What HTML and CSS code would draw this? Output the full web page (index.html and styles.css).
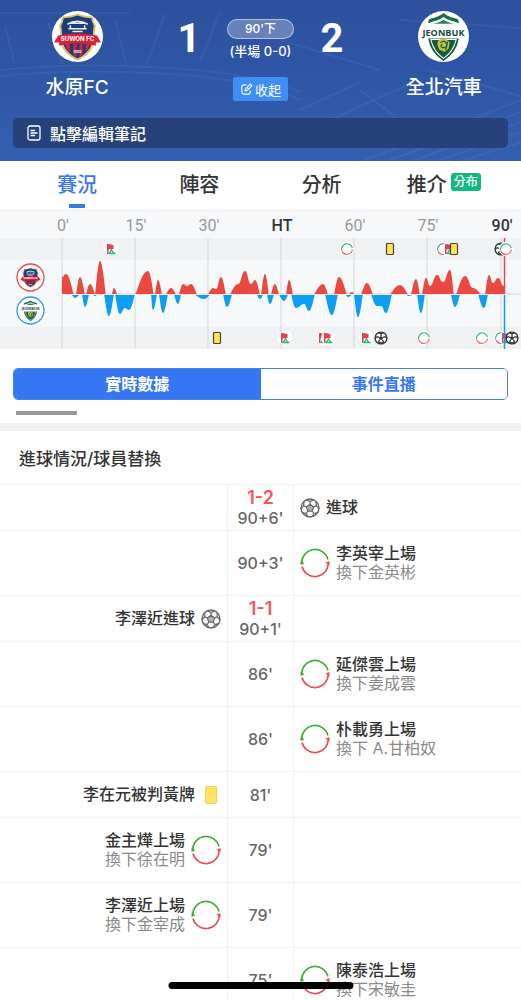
FILE: index.html
```
<!DOCTYPE html>
<html lang="zh-Hant">
<head>
  <meta charset="UTF-8" />
  <meta name="viewport" content="width=device-width, initial-scale=1.0" />
  <title>水原FC 1-2 全北汽車</title>
  <link rel="stylesheet" href="styles.css">
</head>
<body>
  <!-- shared icons -->
  <svg class="sprite" aria-hidden="true">
    <symbol id="suwon" viewBox="0 0 50 50">
      <circle cx="25" cy="25" r="25" fill="#fff"/>
      <path d="M25 2.500 Q31 5 40 5.500 Q40 10 43 14 Q42 19 42 27 Q41 42 25 48.500 Q9 42 8 27 Q8 19 7 14 Q10 10 10 5.500 Q19 5 25 2.500Z" fill="#d8c27a"/>
      <path d="M25 4.500 Q31 7 38.500 7 Q39 11 41 14.500 Q40 19 40 27 Q39 40 25 46.500 Q11 40 10 27 Q10 19 9 14.500 Q11 11 11.500 7 Q19 7 25 4.500Z" fill="#1d3e74"/>
      <path d="M13 32h4.500v9l-2.500-3zM21 32h3v13l-3-2zM27 32h3v11l-3 2zM33 32h4q-1 5-4 8z" fill="#d92236"/>
      <path d="M15 13 Q25 7 35 13M18 12h14M16 17.500h18M18 14v3M32 14v3M20 20h10" fill="none" stroke="#e4ebf3" stroke-width="1.500"/>
      <path d="M6 24 Q25 20 44 24 L48 31 L43 31 V34 Q25 29 7 34 V31 L2 31Z" fill="#dc2138"/>
      <text x="25" y="29.500" text-anchor="middle" class="crest-text" fill="#fff">SUWON FC</text>
      <text x="25" y="41" text-anchor="middle" class="crest-year" fill="#fff">2003</text>
    </symbol>
    <symbol id="jeonbuk" viewBox="0 0 50 50">
      <circle cx="25" cy="25" r="25" fill="#fff"/>
      <path d="M10 12 Q10 8 12 7.500 Q20 6 25 2 Q30 6 38 7.500 Q40 8 40 12 L36 10.500 Q29 9 25 6 Q21 9 14 10.500Z" fill="#1b6b4c"/>
      <path d="M14 12.500 Q21 11.500 25 8.500 Q29 11.500 36 12.500Z" fill="#2b7958"/>
      <path d="M10 27h30q-2 14-15 22Q12 41 10 27Z" fill="#145c3e"/>
      <path d="M12.500 28h25q-3 12-12.500 18.500Q15.500 40 12.500 28Z" fill="none" stroke="#fff" stroke-width="1"/>
      <path d="M20 29q5-4 9 0l2 2-1 6-4 3-5-2q-3-5-1-9z" fill="#c7c23c"/>
      <path d="M22 31q4-3 6 1t-4 4q-3-2 0-3M29 30l-2 8" fill="none" stroke="#145c3e" stroke-width="1.200"/>
      <text x="25" y="24.500" text-anchor="middle" class="crest-name" fill="#174a39">JEONBUK</text>
    </symbol>
    <symbol id="ball" viewBox="0 0 20 20">
      <circle cx="10" cy="10" r="9" fill="#fff" stroke="currentColor" stroke-width="1.400"/>
      <path d="M10 6.300l3.600 2.600-1.400 4.300H7.800L6.400 8.900z" fill="currentColor" fill-opacity=".5" stroke="currentColor" stroke-width="1.200"/>
      <path d="M10 6.300V3.500M13.600 8.900l2.800-1M12.200 13.200l1.800 2.500M7.800 13.200L6 15.700M6.400 8.900L3.600 7.900M6.500 1.900L10 3.500l3.500-1.600M16.400 7.900L16 4M16.400 7.900L19 10.800M14 15.700l3.500-1M14 15.700l-2 3M6 15.700l2 3M6 15.700l-3.500-1M3.600 7.900L1 10.800M3.600 7.900L4 4" fill="none" stroke="currentColor" stroke-width="1.200"/>
    </symbol>
    <symbol id="sub" viewBox="0 0 30 30">
      <path d="M1.800 14.500A13.300 13.300 0 0 1 28 11.500" fill="none" stroke="#43a83c" stroke-width="1.600"/>
      <path d="M.5 12.500V17l4-1.500z" fill="#43a83c"/>
      <path d="M28.200 15.500A13.300 13.300 0 0 1 2 18.500" fill="none" stroke="#f04b50" stroke-width="1.600"/>
      <path d="M29.500 17.500V13l-4 1.500z" fill="#f04b50"/>
    </symbol>
    <symbol id="card" viewBox="0 0 12 18">
      <rect x=".5" y=".5" width="11" height="17" rx="1.500" fill="#fde45f" stroke="#ecd25c"/>
    </symbol>
    <symbol id="m-sub" viewBox="0 0 14 14">
      <circle cx="7" cy="7" r="7" fill="#fff"/>
      <path d="M1.600 8A5.500 5.500 0 0 1 12.400 6" fill="none" stroke="#2eb58a" stroke-width="1.100"/>
      <path d="M12.400 7.500A5.500 5.500 0 0 1 1.700 8.500" fill="none" stroke="#f0605c" stroke-width="1.100"/>
    </symbol>
    <symbol id="m-corner" viewBox="0 0 14 14">
      <circle cx="7" cy="7" r="7" fill="#fff"/>
      <path d="M3 2h1.500l5 1v4l-5 .5V12H3z" fill="#e8404c"/>
      <path d="M4.500 11.500h7M5.500 11l2-3 2 3" fill="none" stroke="#1fb572" stroke-width="1.300"/>
    </symbol>
    <symbol id="m-card" viewBox="0 0 14 14">
      <rect x="3.500" y="1.500" width="7" height="11" rx="1" fill="#fde25a" stroke="#45422f" stroke-width="1.200"/>
    </symbol>
    <symbol id="m-ball" viewBox="0 0 20 20">
      <circle cx="10" cy="10" r="8.500" fill="#fff" stroke="#333" stroke-width="1.800"/>
      <path d="M10 7l3 2.200-1.200 3.400H8.200L7 9.200z" fill="#333"/>
      <path d="M10 7V4M13 9.200l3-1.200M11.800 12.600l2.200 3M8.200 12.600l-2.200 3M7 9.200L4 8M6.500 2.500L10 4l3.500-1.500M16 8l2.500 3M4 8l-2.500 3M14 15.600L10.500 17h-1L6 15.600" fill="none" stroke="#333" stroke-width="1.800"/>
    </symbol>
  </svg>

  <main class="app">
    <header class="match">
      <svg class="stadium" viewBox="0 0 521 161" preserveAspectRatio="none" aria-hidden="true">
        <path d="M0 13H130M0 70Q80 62 170 68T300 92M0 76Q80 68 170 74T300 100M5 25L14 62M48 22l14 42M115 20l12 46M165 14l-18 50M220 12l-20 50" />
        <path d="M300 110l60-28M330 120l80-36M365 160l156-60M390 160l131-48M415 160l106-38M440 160l81-28M465 160l56-18M280 40l100 30M400 20l121 8M360 90l40 30M430 70l90 26" />
      </svg>
      <div class="scoreline">
        <div class="team">
          <svg class="crest"><use href="#suwon"/></svg>
          <span class="team-name">水原FC</span>
        </div>
        <div class="result">
          <span class="goals">1</span>
          <div class="status">
            <span class="clock">90'下</span>
            <span class="half">(半場 0-0)</span>
            <button class="collapse">
              <svg viewBox="0 0 14 14" width="13" height="13" fill="none" stroke="currentColor" stroke-width="1.200"><path d="M7 2H4Q2 2 2 4v6q0 2 2 2h5q2 0 2-2V8M5.500 8.500l.6-2.400L11 1.200l1.800 1.800L7.900 7.900zM8 5.500l2 1"/></svg>
              收起
            </button>
          </div>
          <span class="goals">2</span>
        </div>
        <div class="team">
          <svg class="crest"><use href="#jeonbuk"/></svg>
          <span class="team-name">全北汽車</span>
        </div>
      </div>
      <button class="note">
        <svg viewBox="0 0 14 16" width="14" height="16" fill="none" stroke="currentColor" stroke-width="1.300"><rect x="1" y="1" width="12" height="14" rx="2"/><path d="M3.500 5.500H8M3.500 8h7M3.500 10.500H8"/></svg>
        點擊編輯筆記
      </button>
    </header>

    <nav class="tabs">
      <a href="#live" class="tab active">賽況</a>
      <a href="#lineup" class="tab">陣容</a>
      <a href="#analysis" class="tab">分析</a>
      <a href="#tips" class="tab">推介<span class="badge">分布</span></a>
    </nav>

    <svg class="momentum" id="momentum" viewBox="0 0 521 139" role="img" aria-label="比賽走勢">
      <rect width="521" height="139" fill="#f6f8fa"/>
      <rect y="28" width="521" height="22" fill="#f0f1f2"/>
      <rect y="117" width="521" height="22" fill="#f0f1f2"/>
      <path d="M0 .5H521" stroke="#eceef0"/>
      <g id="grid"></g>
      <path d="M62 84H521" stroke="#d5d7d9"/>
      <path id="home" fill="#ea4942"/>
      <path id="away" fill="#0a9ff5"/>
      <path d="M62 84.500H505" stroke="#fbe9e8"/>
      <circle cx="30.500" cy="67.500" r="13.500" fill="#fff" stroke="#e0504c" stroke-width="1.300"/>
      <use href="#suwon" x="19.500" y="56.500" width="22" height="22"/>
      <circle cx="30.500" cy="100.500" r="13.500" fill="#fff" stroke="#2a9fdc" stroke-width="1.300"/>
      <use href="#jeonbuk" x="19.500" y="89.500" width="22" height="22"/>
      <g id="markers"></g>
      <path d="M504.500 28V84" stroke="#ea4942" stroke-width="1.500"/>
      <path d="M504.500 85V139" stroke="#0a9ff5" stroke-width="1.500"/>
      <use href="#m-sub" x="499" y="32" width="14" height="14"/>
      <use href="#m-ball" x="505" y="121" width="14" height="14"/>
    </svg>

    <div class="switch">
      <button class="switch-item on">實時數據</button>
      <button class="switch-item">事件直播</button>
    </div>
    <div class="scroll-hint"></div>

    <section class="events">
      <h2>進球情況/球員替換</h2>
      <table>
        <colgroup><col><col class="col-time"><col></colgroup>
        <tbody>
          <tr>
            <td></td>
            <td class="time"><b>1-2</b>90+6'</td>
            <td><div class="event"><svg class="ball"><use href="#ball"/></svg><p>進球</p></div></td>
          </tr>
          <tr class="tall">
            <td></td>
            <td class="time">90+3'</td>
            <td><div class="event"><svg class="sub"><use href="#sub"/></svg><p>李英宰上場<small>換下金英彬</small></p></div></td>
          </tr>
          <tr>
            <td><div class="event left"><svg class="ball"><use href="#ball"/></svg><p>李澤近進球</p></div></td>
            <td class="time"><b>1-1</b>90+1'</td>
            <td></td>
          </tr>
          <tr class="tall">
            <td></td>
            <td class="time">86'</td>
            <td><div class="event"><svg class="sub"><use href="#sub"/></svg><p>延傑雲上場<small>換下姜成雲</small></p></div></td>
          </tr>
          <tr class="tall">
            <td></td>
            <td class="time">86'</td>
            <td><div class="event"><svg class="sub"><use href="#sub"/></svg><p>朴載勇上場<small>換下 A.甘柏奴</small></p></div></td>
          </tr>
          <tr>
            <td><div class="event left"><svg class="card"><use href="#card"/></svg><p>李在元被判黃牌</p></div></td>
            <td class="time">81'</td>
            <td></td>
          </tr>
          <tr class="tall">
            <td><div class="event left"><svg class="sub"><use href="#sub"/></svg><p>金主燁上場<small>換下徐在明</small></p></div></td>
            <td class="time">79'</td>
            <td></td>
          </tr>
          <tr class="tall">
            <td><div class="event left"><svg class="sub"><use href="#sub"/></svg><p>李澤近上場<small>換下金宰成</small></p></div></td>
            <td class="time">79'</td>
            <td></td>
          </tr>
          <tr class="tall">
            <td></td>
            <td class="time">75'</td>
            <td><div class="event"><svg class="sub"><use href="#sub"/></svg><p>陳泰浩上場<small>換下宋敏圭</small></p></div></td>
          </tr>
        </tbody>
      </table>
    </section>
  </main>
  <div class="home-bar"></div>

  <script src="chart.js"></script>
</body>
</html>
```
FILE: styles.css
```
* {
  box-sizing: border-box;
}
body {
  margin: 0;
  background: #fff;
  color: #333;
  font-family: Inter, "Noto Sans CJK TC", sans-serif;
}
button {
  border: none;
  font-family: inherit;
  cursor: pointer;
}
.sprite {
  display: none;
}
.app {
  height: 100vh;
  overflow-y: auto;
  scrollbar-width: none;
}

/* match header */
.match {
  position: relative;
  padding: 11px 13px 13px;
  background: linear-gradient(#2c509c, #2f57a8 50%, #355fb0);
  color: #fff;
}
.stadium {
  position: absolute;
  inset: 0;
  width: 100%;
  height: 100%;
  fill: none;
  stroke: #fff;
  stroke-opacity: 0.05;
  stroke-width: 2;
}
.scoreline {
  position: relative;
  display: grid;
  grid-template-columns: 1fr 2fr 1fr;
  padding: 0 3px;
}
.team {
  display: flex;
  flex-direction: column;
  align-items: center;
  gap: 13px;
}
.crest {
  width: 51px;
  height: 51px;
}
.crest-text {
  font: 700 6px Inter, sans-serif;
}
.crest-year {
  font: 700 3px Inter, sans-serif;
}
.crest-name {
  font: 700 9px "Open Sans", sans-serif;
}
.team-name {
  font-size: 19px;
  font-weight: 500;
  line-height: 26px;
}
.result {
  display: flex;
  justify-content: center;
  gap: 26px;
}
.goals {
  width: 24px;
  text-align: center;
  font-family: Roboto, sans-serif;
  font-size: 40px;
  font-weight: 700;
  line-height: 56px;
}
.status {
  display: flex;
  flex-direction: column;
  align-items: center;
  padding-top: 8px;
}
.clock {
  width: 67px;
  height: 20px;
  border: 1px solid rgba(255, 255, 255, 0.5);
  border-radius: 10px;
  background: rgba(255, 255, 255, 0.28);
  text-align: center;
  font-size: 12px;
  font-weight: 500;
  line-height: 18px;
}
.half {
  margin-top: 2px;
  font-size: 13px;
  font-weight: 500;
  line-height: 20px;
}
.collapse {
  display: flex;
  align-items: center;
  gap: 2px;
  height: 24px;
  margin-top: 16px;
  padding: 0 7px;
  border-radius: 2px;
  background: #3f8df6;
  color: #fff;
  font-size: 13px;
}
.note {
  position: relative;
  display: flex;
  align-items: center;
  gap: 9px;
  width: 100%;
  height: 30px;
  margin-top: 17px;
  padding: 0 14px;
  border-radius: 5px;
  background: #27427b;
  color: #fff;
  font-size: 16px;
  font-weight: 500;
}

/* tabs */
.tabs {
  display: grid;
  grid-template-columns: repeat(4, 1fr);
  height: 49px;
  padding: 0 16px;
}
.tab {
  position: relative;
  display: flex;
  justify-content: center;
  color: #333;
  font-size: 20px;
  font-weight: 500;
  line-height: 48px;
  text-decoration: none;
}
.tab.active {
  color: #3878f0;
}
.tab.active::after {
  content: "";
  position: absolute;
  bottom: 2px;
  width: 16px;
  height: 4px;
  background: #3878e8;
}
.badge {
  height: 18px;
  margin: 12px 0 0 4px;
  padding: 0 3px;
  border-radius: 3px;
  background: #10b981;
  color: #fff;
  font-size: 12px;
  line-height: 18px;
}

/* momentum chart */
.momentum {
  display: block;
  width: 100%;
}
.tick {
  fill: #96989b;
  font: 400 16px Roboto, sans-serif;
}
.tick.strong {
  fill: #333;
  font-weight: 500;
}

.switch {
  display: flex;
  height: 32px;
  margin: 19px 13px 0;
  overflow: hidden;
  border: 1px solid #4a80e8;
  border-radius: 5px;
}
.switch-item {
  flex: 1;
  padding: 0 0 2px;
  background: #fff;
  color: #3878f0;
  font-size: 16px;
  font-weight: 700;
}
.switch-item.on {
  background: #3577f2;
  color: #fff;
}
.scroll-hint {
  width: 61px;
  height: 4px;
  margin: 11px 16px 8px;
  background: #999;
}

/* goals and substitutions */
.events {
  border-top: 8px solid #f1f1f1;
}
.events h2 {
  margin: 0;
  padding: 3px 19px 0;
  font-size: 17px;
  font-weight: 500;
  line-height: 50px;
}
table {
  width: 100%;
  table-layout: fixed;
  border-collapse: collapse;
}
.col-time {
  width: 66px;
}
tr {
  height: 46px;
  border-top: 1px solid #f0f0f0;
}
.tall {
  height: 65px;
}
td {
  padding: 0 6px;
}
.time {
  padding: 0;
  border: solid #f0f0f0;
  border-width: 0 1px;
  color: #666;
  text-align: center;
  font-size: 16px;
  font-weight: 500;
  line-height: 20px;
}
.time b {
  display: block;
  color: #fa5555;
  font-size: 18px;
  font-weight: 600;
}
.event {
  display: flex;
  align-items: center;
  gap: 6px;
}
.event.left {
  flex-direction: row-reverse;
  text-align: right;
}
.event p {
  margin: 0;
  font-size: 16px;
  font-weight: 500;
  line-height: 19px;
}
.event small {
  display: block;
  color: #8a8a8a;
  font-size: 16px;
  font-weight: 400;
}
.ball {
  width: 20px;
  height: 20px;
  color: #666;
}
.sub {
  width: 30px;
  height: 30px;
}
.card {
  width: 12px;
  height: 18px;
  margin: 0 4px;
}
.home-bar {
  position: fixed;
  bottom: 11px;
  left: 50%;
  width: 185px;
  height: 7px;
  border-radius: 4px;
  background: #000;
  transform: translateX(-50%);
}
```
FILE: chart.js
```
const BASE = 84;

const ticks = [
  [62, "0'"], [135, "15'"], [208, "30'"], [281, "HT", true],
  [354, "60'"], [427, "75'"], [501, "90'", true]
];

// each run is a list of x, y pairs above or below the base line
const home = [
  [62, 84, 62, 67, 66, 64, 74, 84],
  [76, 84, 80, 67, 85, 84],
  [86, 84, 90, 74, 95, 84],
  [95, 84, 100, 51, 106, 84],
  [112, 84, 114, 78, 117, 84],
  [135, 84, 148, 61, 154, 84],
  [155, 84, 158, 70, 162, 84],
  [166, 84, 171, 78, 176, 84],
  [179, 84, 183, 74, 187, 76, 191, 74, 197, 84],
  [208, 84, 213, 78, 216, 79, 221, 67, 226, 84],
  [230, 84, 238, 74, 245, 61, 251, 74, 255, 70, 260, 84],
  [261, 84, 265, 64, 269, 84],
  [271, 84, 275, 74, 279, 84],
  [286, 84, 289, 70, 293, 84],
  [314, 84, 323, 74, 328, 84],
  [334, 84, 339, 67, 347, 84],
  [349, 84, 352, 82, 354, 84],
  [361, 84, 367, 73, 373, 84],
  [390, 84, 400, 75, 408, 84],
  [411, 84, 416, 69, 420, 84],
  [422, 84, 426, 68, 430, 76, 437, 65, 443, 72, 450, 60, 454, 84],
  [456, 84, 465, 66, 473, 78, 481, 84],
  [485, 84, 489, 65, 493, 73, 498, 68, 504, 76, 504, 84]
];
const away = [
  [72, 85, 75, 88, 79, 85],
  [82, 85, 85, 97, 89, 85],
  [93, 85, 95, 86, 97, 85],
  [104, 85, 109, 106, 114, 85],
  [115, 85, 120, 104, 125, 98, 129, 100, 135, 85],
  [151, 85, 153, 100, 157, 85],
  [159, 85, 163, 103, 168, 85],
  [174, 85, 178, 94, 181, 85],
  [195, 85, 204, 89, 210, 85],
  [223, 85, 227, 97, 232, 85],
  [257, 85, 260, 89, 263, 85],
  [267, 85, 270, 94, 274, 85],
  [279, 85, 284, 91, 288, 85],
  [291, 85, 296, 98, 304, 94, 309, 101, 315, 85],
  [325, 85, 332, 105, 338, 85],
  [346, 85, 348, 87, 352, 85],
  [354, 85, 358, 107, 363, 85],
  [371, 85, 377, 96, 381, 96, 386, 103, 392, 85],
  [406, 85, 409, 86, 412, 85],
  [417, 85, 421, 103, 425, 85],
  [451, 85, 455, 97, 460, 85],
  [478, 85, 484, 98, 488, 85]
];

// x, row centre, icon
const markers = [
  [111, 39, "corner"], [347, 39, "sub"], [390, 39, "card"],
  [443, 39, "sub"], [449, 39, "corner"], [454, 39, "card"],
  [501, 39, "ball"],
  [217, 128, "card"], [285, 128, "corner"], [323, 128, "corner"],
  [328, 128, "corner"], [366, 128, "corner"], [381, 128, "ball"],
  [424, 128, "sub"], [482, 128, "sub"], [501, 128, "sub"],
  [506, 128, "corner"]
];

function wave(runs) {
  return runs.map(run => {
    let d = `M${run[0]} ${run[1]}`;
    for (let i = 2; i < run.length; i += 2) {
      const [x0, y0, x1, y1] = run.slice(i - 2, i + 2);
      const w = x1 - x0;
      const out = Math.abs(y0 - BASE) < 2 ? 0.15 : 0.5;
      const into = Math.abs(y1 - BASE) < 2 ? 0.15 : 0.5;
      d += `C${x0 + w * out} ${y0} ${x1 - w * into} ${y1} ${x1} ${y1}`;
    }
    return d + "Z";
  }).join("");
}

document.getElementById("home").setAttribute("d", wave(home));
document.getElementById("away").setAttribute("d", wave(away));

document.getElementById("grid").innerHTML = ticks.map(([x, label, strong]) =>
  `<path d="M${x} 28V139" stroke="#d5d7d9"/>
   <text x="${x + 1}" y="21" text-anchor="middle" class="tick${strong ? " strong" : ""}">${label}</text>`
).join("");

document.getElementById("markers").innerHTML = markers.map(([x, y, icon]) =>
  `<use href="#m-${icon}" x="${x - 7}" y="${y - 7}" width="14" height="14"/>`
).join("");
```
